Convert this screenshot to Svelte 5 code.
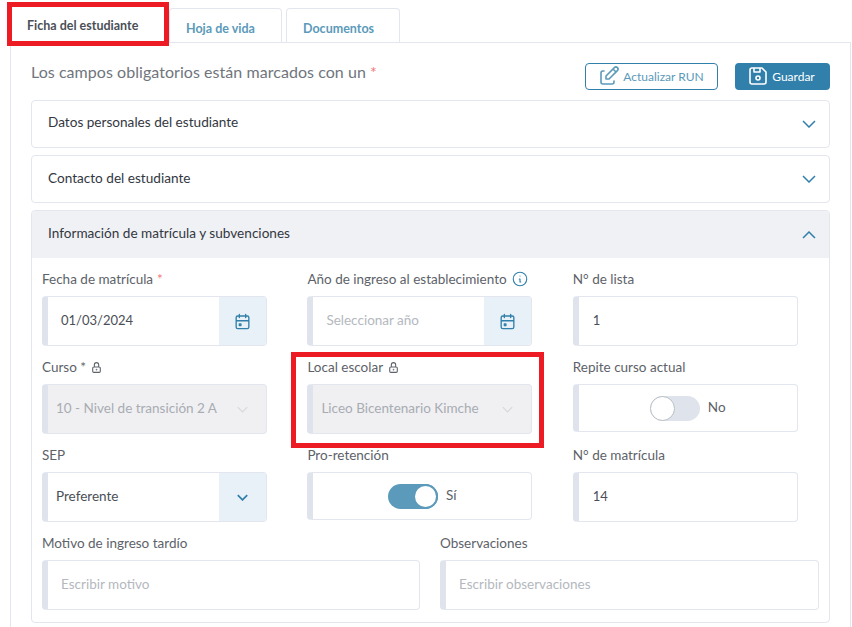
<script lang="ts">
  const calendar = "M4 7a2 2 0 0 1 2-2h12a2 2 0 0 1 2 2v12a2 2 0 0 1-2 2H6a2 2 0 0 1-2-2zM16 3v4M8 3v4M4 11h16M8 15h2v2H8z";
  const lock = "M5 13a2 2 0 0 1 2-2h10a2 2 0 0 1 2 2v6a2 2 0 0 1-2 2H7a2 2 0 0 1-2-2zM8 11V7a4 4 0 1 1 8 0v4M11.5 16a.5.5 0 1 0 1 0a.5.5 0 1 0-1 0";
</script>

<div class="page">
  <nav class="tabs">
    <button class="tab active">Ficha del estudiante</button>
    <button class="tab">Hoja de vida</button>
    <button class="tab last">Documentos</button>
  </nav>

  <section class="panel">
    <header class="top">
      <p class="hint">Los campos obligatorios están marcados con un <span class="req">*</span></p>
      <div class="actions">
        <button class="btn outline">
          <svg viewBox="0 0 24 24" width="24" height="24"><path d="M7 7H6a2 2 0 0 0-2 2v9a2 2 0 0 0 2 2h9a2 2 0 0 0 2-2v-1M20.4 6.6a2.1 2.1 0 0 0-3-3L9 12v3h3zM16 5l3 3" /></svg>
          Actualizar RUN
        </button>
        <button class="btn solid">
          <svg viewBox="0 0 24 24" width="24" height="24"><path d="M6 4h10l4 4v10a2 2 0 0 1-2 2H6a2 2 0 0 1-2-2V6a2 2 0 0 1 2-2M10 14a2 2 0 1 0 4 0a2 2 0 1 0-4 0M14 4v4H8V4" /></svg>
          Guardar
        </button>
      </div>
    </header>

    <div class="acc">
      <div class="acc-head first">
        <span>Datos personales del estudiante</span>
        <svg class="chev" viewBox="0 0 14 8" width="14" height="8"><path d="M1 1l6 6l6-6" /></svg>
      </div>
    </div>
    <div class="acc">
      <div class="acc-head">
        <span>Contacto del estudiante</span>
        <svg class="chev" viewBox="0 0 14 8" width="14" height="8"><path d="M1 1l6 6l6-6" /></svg>
      </div>
    </div>

    <div class="acc">
      <div class="acc-head open">
        <span>Información de matrícula y subvenciones</span>
        <svg class="chev" viewBox="0 0 14 8" width="14" height="8"><path d="M1 7l6-6l6 6" /></svg>
      </div>
      <div class="acc-body">
        <div class="grid">
          <div class="field">
            <div class="label">Fecha de matrícula <span class="req">*</span></div>
            <div class="control">
              <span class="value date">01/03/2024</span>
              <span class="addon"><svg class="ico" viewBox="0 0 24 24" width="19" height="19"><path d={calendar} /></svg></span>
            </div>
          </div>
          <div class="field">
            <div class="label">
              Año de ingreso al establecimiento
              <svg class="ico info" viewBox="0 0 24 24" width="18" height="18"><path d="M3 12a9 9 0 1 0 18 0a9 9 0 1 0-18 0M12 8h.01M11 12h1v4h1" /></svg>
            </div>
            <div class="control">
              <span class="value muted">Seleccionar año</span>
              <span class="addon"><svg class="ico" viewBox="0 0 24 24" width="19" height="19"><path d={calendar} /></svg></span>
            </div>
          </div>
          <div class="field">
            <div class="label">N° de lista</div>
            <div class="control"><span class="value num">1</span></div>
          </div>

          <div class="field">
            <div class="label">
              Curso *
              <svg class="lock" viewBox="0 0 24 24" width="13" height="13"><path d={lock} /></svg>
            </div>
            <div class="control disabled">
              <span class="value select">10 - Nivel de transición 2 A</span>
              <span class="addon"><svg class="chev-sm" viewBox="0 0 14 8" width="11" height="7"><path d="M1 1l6 6l6-6" /></svg></span>
            </div>
          </div>
          <div class="field">
            <div class="label">
              Local escolar
              <svg class="lock" viewBox="0 0 24 24" width="13" height="13"><path d={lock} /></svg>
            </div>
            <div class="control disabled">
              <span class="value select">Liceo Bicentenario Kimche</span>
              <span class="addon"><svg class="chev-sm" viewBox="0 0 14 8" width="11" height="7"><path d="M1 1l6 6l6-6" /></svg></span>
            </div>
          </div>
          <div class="field">
            <div class="label">Repite curso actual</div>
            <div class="control short toggle-wrap">
              <span class="track"><span class="knob"></span></span>
              <span class="state">No</span>
            </div>
          </div>

          <div class="field">
            <div class="label">SEP</div>
            <div class="control">
              <span class="value select dark">Preferente</span>
              <span class="addon"><svg class="chev-bold" viewBox="0 0 14 8" width="11" height="7"><path d="M1 1l6 6l6-6" /></svg></span>
            </div>
          </div>
          <div class="field">
            <div class="label">Pro-retención</div>
            <div class="control short toggle-wrap">
              <span class="track on"><span class="knob"></span></span>
              <span class="state">Sí</span>
            </div>
          </div>
          <div class="field">
            <div class="label">N° de matrícula</div>
            <div class="control"><span class="value num">14</span></div>
          </div>
        </div>

        <div class="grid two">
          <div class="field">
            <div class="label">Motivo de ingreso tardío</div>
            <div class="control"><span class="value muted">Escribir motivo</span></div>
          </div>
          <div class="field">
            <div class="label">Observaciones</div>
            <div class="control"><span class="value muted">Escribir observaciones</span></div>
          </div>
        </div>
      </div>
    </div>
  </section>

  <div class="mark mark-tab"></div>
  <div class="mark mark-local"></div>
</div>

<style>
  :global(body) {
    margin: 0;
    background: #fff;
  }

  .page {
    position: relative;
    width: 852px;
    height: 627px;
    overflow: hidden;
    font-family: "Lato", "Noto Sans", sans-serif;
    font-size: 14px;
    color: #4a4f57;
  }

  .tabs {
    display: flex;
    height: 34px;
    padding: 8px 0 0 12px;
  }

  .tab {
    font: inherit;
    font-weight: 700;
    font-size: 12.5px;
    color: #5b9aba;
    background: #fff;
    border: 1px solid #e3e6ee;
    border-bottom: none;
    border-radius: 4px 4px 0 0;
    padding: 5px 0 0 16px;
    margin-right: 4px;
    width: 113px;
    text-align: left;
    white-space: nowrap;
  }

  .tab.last {
    width: 114px;
  }

  .tab.active {
    width: 157px;
    margin-right: 0;
    color: #4a4f57;
    border: none;
    padding: 0 0 0 15px;
  }

  .panel {
    width: 841px;
    height: 600px;
    margin-left: 10px;
    box-sizing: border-box;
    border: 1px solid #e3e6ee;
    border-bottom: none;
    padding: 20px 20px 0;
  }

  .top {
    display: flex;
    justify-content: space-between;
    align-items: flex-start;
    height: 37px;
  }

  .hint {
    margin: 0;
    font-size: 16px;
    line-height: 18px;
    letter-spacing: 0.05px;
    color: #70757d;
  }

  .req {
    color: #f0767a;
  }

  .actions {
    display: flex;
    gap: 17px;
  }

  .btn {
    display: flex;
    align-items: center;
    justify-content: center;
    gap: 2px;
    height: 27px;
    box-sizing: border-box;
    padding: 0 2px 1px 0;
    font: inherit;
    font-size: 12px;
    border-radius: 4px;
  }

  .btn svg {
    fill: none;
    stroke: currentColor;
    stroke-width: 1.6;
    stroke-linecap: round;
    stroke-linejoin: round;
  }

  .outline {
    width: 133px;
    color: #5b9aba;
    background: #fff;
    border: 1px solid #317fab;
  }

  .solid {
    width: 95px;
    padding-right: 4px;
    color: #fff;
    background: #317fab;
    border: none;
  }

  .acc {
    border: 1px solid #e3e6ee;
    border-radius: 4px;
    margin-bottom: 7px;
    box-sizing: border-box;
    width: 799px;
  }

  .acc-head {
    display: flex;
    justify-content: space-between;
    align-items: center;
    height: 46px;
    padding: 0 13px 0 16px;
    font-size: 13.6px;
    color: #33383f;
  }

  .acc-head span {
    padding-bottom: 3px;
  }

  .acc-head.first span {
    padding-bottom: 5px;
  }

  .acc-head.open {
    background: #f0f1f5;
    border-radius: 3px 3px 0 0;
    padding-bottom: 2px;
    height: 45px;
  }

  .acc-head.open span {
    padding-bottom: 1px;
  }

  .acc-head.open .chev {
    margin-top: 2px;
  }

  .chev {
    fill: none;
    stroke: #317fab;
    stroke-width: 1.5;
  }

  .acc-body {
    padding: 12px 10px 12px 10px;
  }

  .grid {
    display: grid;
    grid-template-columns: repeat(3, 224.8px);
    column-gap: 40.6px;
    row-gap: 12px;
  }

  .grid.two {
    grid-template-columns: 378px 379px;
    column-gap: 20px;
    margin-top: 12px;
  }

  .field {
    height: 76px;
  }

  .label {
    display: flex;
    align-items: center;
    gap: 4px;
    box-sizing: border-box;
    height: 20px;
    margin-bottom: 6px;
    padding-bottom: 2px;
    font-size: 13.5px;
    color: #5d6269;
    white-space: nowrap;
  }

  .control {
    display: flex;
    align-items: center;
    box-sizing: border-box;
    height: 50px;
    background: #fff;
    border: 1px solid #e3e6ee;
    border-left: 6px solid #dfe3ec;
    border-radius: 4px;
    overflow: hidden;
  }

  .control.short {
    height: 48px;
  }

  .control.disabled {
    background: #f0f0f2;
  }

  .value {
    flex: 1;
    min-width: 0;
    padding: 0 0 2px 13px;
    font-size: 13.5px;
    color: #4a4f57;
    white-space: nowrap;
    overflow: hidden;
  }

  .value.muted {
    color: #b4b8be;
  }

  .value.date {
    font-size: 13px;
  }

  .value.num {
    font-size: 13px;
    padding-left: 14px;
  }

  .value.select {
    padding-left: 8px;
    color: #a8acb2;
  }

  .value.select.dark {
    color: #4a4f57;
  }

  .addon {
    display: flex;
    align-items: center;
    justify-content: center;
    width: 47px;
    height: 100%;
    flex: none;
    background: #e8f1f7;
  }

  .disabled .addon {
    background: transparent;
  }

  .ico {
    fill: none;
    stroke: #317fab;
    stroke-width: 1.7;
    stroke-linecap: round;
    stroke-linejoin: round;
  }

  .info {
    margin-left: 0;
    stroke-width: 1.5;
  }

  .lock {
    fill: none;
    stroke: #5d6269;
    stroke-width: 2;
  }

  .chev-sm {
    fill: none;
    stroke: #d6d8dc;
    stroke-width: 1.5;
  }

  .chev-bold {
    fill: none;
    stroke: #317fab;
    stroke-width: 2.2;
  }

  .toggle-wrap {
    justify-content: center;
    gap: 8px;
  }

  .track {
    display: flex;
    width: 50px;
    height: 25px;
    border-radius: 13px;
    background: #dfe3ec;
  }

  .knob {
    box-sizing: border-box;
    width: 25px;
    height: 25px;
    background: #fff;
    border: 1px solid #b9bec6;
    border-radius: 50%;
  }

  .track.on {
    justify-content: flex-end;
    background: #5b9aba;
  }

  .track.on .knob {
    border: 2px solid #5b9aba;
  }

  .state {
    padding-bottom: 2px;
    font-size: 13.5px;
    color: #5d6269;
  }

  .mark {
    position: absolute;
    box-sizing: border-box;
    border: 5px solid #ed1c24;
  }

  .mark-tab {
    left: 7px;
    top: 2px;
    width: 162px;
    height: 44px;
  }

  .mark-local {
    left: 291px;
    top: 352px;
    width: 253px;
    height: 96px;
  }
</style>
